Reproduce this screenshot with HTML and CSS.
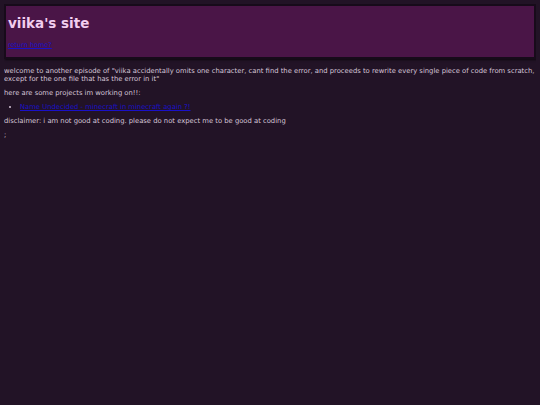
FILE: index.html
```html
<!DOCTYPE html>
<html lang="en">
<head>
    <meta charset="UTF-8">
    <title>viika's site</title>
    <link rel="stylesheet" href="styles.css">
</head>
<body>
    <div class="header">
        <h1>viika's site</h1>
        <a href="#">return home?</a>
    </div>
    <p>welcome to another episode of "viika accidentally omits one character, cant find the error, and proceeds to rewrite every single piece of code from scratch, except for the one file that has the error in it"</p>
    <p>here are some projects im working on!!:</p>
    <ul>
        <li><a href="#">Name Undecided - minecraft in minecraft again ?!</a></li>
    </ul>
    <p>disclaimer: i am not good at coding. please do not expect me to be good at coding</p>
    <p>;</p>
</body>
</html>
```

FILE: styles.css
```css
body {
    font-family: 'DejaVu Sans', Verdana, sans-serif;
    font-size: 6.8px;
    line-height: 8px;
    background-color: #221326;
    color: #d6c6d8;
    margin: 4px;
}

.header {
    background: #4a1547;
    border: 2px solid #170b1a;
    box-shadow: 1px 1px 2px rgba(0,0,0,0.6);
    padding: 9px 2px 8px;
    margin-bottom: 8px;
}

.header h1 {
    font-size: 13.5px;
    line-height: 16px;
    color: #f2cdef;
    margin: 0 0 10px;
}

.header a {
    font-size: 6.5px;
}

a {
    color: #1a10c8;
}

p {
    margin: 6px 0;
}

ul {
    margin: 6px 0;
    padding-left: 16px;
}
```
